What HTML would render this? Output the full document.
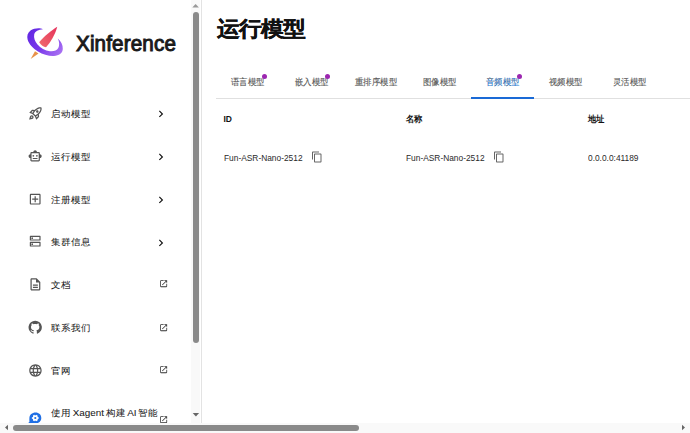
<!DOCTYPE html>
<html><head><meta charset="utf-8">
<style>
html,body{margin:0;padding:0;width:690px;height:433px;overflow:hidden;background:#fff;}
body{position:relative;font-family:"Liberation Sans",sans-serif;color:rgba(0,0,0,0.87);}
.a{position:absolute;white-space:nowrap;line-height:1;}
svg.i{position:absolute;fill:#555;}
.menu{font-size:9.9px;color:#1a1a1a;transform:scaleY(0.95);transform-origin:0 50%;-webkit-text-stroke:0.05px #000;}
.tab{font-size:9px;color:#555;-webkit-text-stroke:0.1px #555;transform:scaleX(0.935);transform-origin:0 0;}
.dot{position:absolute;width:5.6px;height:5.6px;border-radius:50%;background:#9c27b0;}
.th{font-size:8.5px;font-weight:bold;color:#111;}
.td{font-size:9.5px;color:#2a2a2a;transform:scaleX(0.88);transform-origin:0 0;}
</style></head>
<body>
<!-- sidebar -->
<svg class="a" style="left:24px;top:24px" width="42" height="38" viewBox="0 0 42 38">
  <defs>
    <linearGradient id="pg" x1="0" y1="0.2" x2="1" y2="0.8">
      <stop offset="0" stop-color="#6329e4"/><stop offset="0.5" stop-color="#7a3aea"/><stop offset="1" stop-color="#a870f2"/>
    </linearGradient>
    <linearGradient id="rg" x1="1" y1="0" x2="0" y2="1">
      <stop offset="0" stop-color="#e6315c"/><stop offset="1" stop-color="#ef6e6c"/>
    </linearGradient>
  </defs>
  <path d="M18.9 5.3 C16 3.6 10 4.2 6.5 6.5 C3.5 8.8 2.8 12 3.6 15.5 C4.8 20 9 24.5 14 27.5 C19 30.5 25 32.3 30 32 C35 31.6 38.5 29.5 38.8 25 C39 21 37 17 33.8 14.5 C35.5 17.5 35.6 21.5 34.3 24 C32.8 26.8 29.5 27.6 26 27.2 C21 26.6 16.5 24 13.5 20.5 C10.8 17.5 9.6 13.5 10.2 10.5 C11 7.3 14.5 5.6 18.9 5.3 Z" fill="url(#pg)"/>
  <path d="M33.3 2.8 C28 6 20 12.5 15.2 18.2 C17 21 19.5 22.8 22 23.3 C26.5 18.5 31 11 33.3 2.8 Z" fill="url(#rg)"/>
  <path d="M6.6 35.1 L11 27.2 L14.5 29.4 Z" fill="#e8924a"/>
</svg>
<div class="a" style="left:76px;top:33.1px;font-size:21.6px;font-weight:normal;-webkit-text-stroke:1px #1a1a1a;color:#1a1a1a;letter-spacing:0.15px;transform:scaleX(0.955);transform-origin:0 0">Xinference</div>

<!-- menu rows -->
<svg class="i" style="left:27.8px;top:106px" width="14.9" height="14.9" viewBox="0 0 24 24"><path d="M6 15c-.83 0-1.58.34-2.12.88C2.7 17.06 2 22 2 22s4.94-.7 6.12-1.88C8.66 19.58 9 18.83 9 18c0-1.66-1.34-3-3-3zm.71 3.71c-.28.28-2.17.76-2.17.76s.47-1.88.76-2.170c.17-.19.42-.3.7-.3.55 0 1 .45 1 1 0 .28-.11.53-.29.71zm10.71-5.060c6.36-6.36 4.24-11.31 4.24-11.31S16.71.22 10.35 6.58l-2.49-.5c-.65-.13-1.33.08-1.81.55L2 10.69l5 2.14L11.17 17l2.14 5 4.05-4.05c.47-.47.68-1.15.55-1.81l-.49-2.49zM7.41 10.83l-1.91-.82 1.97-1.97 1.44.29c-.57.83-1.08 1.7-1.5 2.5zm6.58 7.67-.82-1.91c.8-.42 1.67-.93 2.49-1.5l.29 1.44-1.96 1.97zM16 12.24c-1.32 1.32-3.38 2.4-4.02 2.72L9.04 12.02c.31-.62 1.39-2.68 2.72-4.01 4.68-4.68 8.23-3.930 8.23-3.93s.78 3.55-3.99 8.16zM15 11c1.1 0 2-.9 2-2s-.9-2-2-2-2 .9-2 2 .9 2 2 2z"/></svg>
<div class="a menu" style="left:51px;top:108.5px">启动模型</div>
<svg class="i" style="left:153.9px;top:107.1px;fill:#111" width="13.8" height="13.8" viewBox="0 0 24 24"><path d="M10 6 8.59 7.41 13.17 12l-4.58 4.59L10 18l6-6z"/></svg>

<svg class="i" style="left:28.1px;top:148.9px" width="14.25" height="14.25" viewBox="0 0 24 24"><path d="M20 9V7c0-1.1-.9-2-2-2h-3c0-1.66-1.34-3-3-3S9 3.34 9 5H6c-1.1 0-2 .9-2 2v2c-1.66 0-3 1.34-3 3s1.34 3 3 3v4c0 1.1.9 2 2 2h12c1.1 0 2-.9 2-2v-4c1.66 0 3-1.34 3-3s-1.34-3-3-3zm-2 10H6V7h12v12zm-9-6c-.83 0-1.5-.67-1.5-1.5S8.17 10 9 10s1.5.67 1.5 1.5S9.83 13 9 13zm7.5-1.5c0 .83-.67 1.5-1.5 1.5s-1.5-.67-1.5-1.5.67-1.5 1.5-1.5 1.5.67 1.5 1.5zM8 15h8v2H8v-2z"/></svg>
<div class="a menu" style="left:51px;top:151.5px">运行模型</div>
<svg class="i" style="left:153.9px;top:150.2px;fill:#111" width="13.8" height="13.8" viewBox="0 0 24 24"><path d="M10 6 8.59 7.41 13.17 12l-4.58 4.59L10 18l6-6z"/></svg>

<svg class="i" style="left:28.3px;top:192px" width="14.4" height="14.4" viewBox="0 0 24 24"><path d="M19 3H5c-1.11 0-2 .9-2 2v14c0 1.1.89 2 2 2h14c1.1 0 2-.9 2-2V5c0-1.1-.9-2-2-2zm0 16H5V5h14v14zm-8-2h2v-4h4v-2h-4V7h-2v4H7v2h4z"/></svg>
<div class="a menu" style="left:51px;top:195px">注册模型</div>
<svg class="i" style="left:153.9px;top:192.9px;fill:#111" width="13.8" height="13.8" viewBox="0 0 24 24"><path d="M10 6 8.59 7.41 13.17 12l-4.58 4.59L10 18l6-6z"/></svg>

<svg class="i" style="left:28.1px;top:234px" width="14.4" height="14.4" viewBox="0 0 24 24"><path d="M19 15v4H5v-4h14m1-2H4c-.55 0-1 .45-1 1v6c0 .55.45 1 1 1h16c.55 0 1-.45 1-1v-6c0-.55-.45-1-1-1zM7 18.5c-.82 0-1.5-.67-1.5-1.5s.68-1.5 1.5-1.5 1.5.67 1.5 1.5-.67 1.5-1.5 1.5zM19 5v4H5V5h14m1-2H4c-.55 0-1 .45-1 1v6c0 .55.45 1 1 1h16c.55 0 1-.45 1-1V4c0-.55-.45-1-1-1zM7 8.5c-.82 0-1.5-.67-1.5-1.5S6.18 5.5 7 5.5s1.5.68 1.5 1.5S7.830 8.5 7 8.5z"/></svg>
<div class="a menu" style="left:51px;top:237px">集群信息</div>
<svg class="i" style="left:153.9px;top:235.6px;fill:#111" width="13.8" height="13.8" viewBox="0 0 24 24"><path d="M10 6 8.59 7.41 13.17 12l-4.58 4.59L10 18l6-6z"/></svg>

<svg class="i" style="left:27.9px;top:277px" width="14.8" height="14.8" viewBox="0 0 24 24"><path d="M8 16h8v2H8zm0-4h8v2H8zm6-10H6c-1.1 0-2 .9-2 2v16c0 1.1.89 2 1.99 2H18c1.1 0 2-.9 2-2V8l-6-6zm4 18H6V4h7v5h5v11z"/></svg>
<div class="a menu" style="left:51px;top:279.5px">文档</div>
<svg class="i" style="left:159.2px;top:279.4px;fill:#333" width="9.3" height="9.3" viewBox="0 0 24 24"><path d="M19 19H5V5h7V3H5c-1.11 0-2 .9-2 2v14c0 1.1.89 2 2 2h14c1.1 0 2-.9 2-2v-7h-2v7zM14 3v2h3.59l-9.83 9.83 1.41 1.41L19 6.41V10h2V3h-7z"/></svg>

<svg class="i" style="left:28.3px;top:320.1px" width="14.4" height="14.4" viewBox="0 0 24 24"><path d="M12 1.27a11 11 0 00-3.48 21.46c.55.09.73-.28.73-.55v-1.84c-3.030.64-3.67-1.46-3.67-1.46-.55-1.29-1.28-1.65-1.28-1.65-.92-.65.1-.65.1-.65 1.1 0 1.73 1.1 1.73 1.1.92 1.65 2.57 1.2 3.21.92a2 2 0 01.64-1.47c-2.47-.27-5.04-1.19-5.04-5.5 0-1.1.46-2.1 1.2-2.84a3.76 3.76 0 010-2.93s.91-.28 3.11 1.1c1.8-.49 3.7-.49 5.5 0 2.1-1.38 3.02-1.1 3.02-1.1a3.76 3.76 0 010 2.93c.83.74 1.2 1.74 1.2 2.94 0 4.21-2.57 5.13-5.04 5.4.45.37.82.92.82 2.02v3.03c0 .27.1.64.73.55A11 11 0 0012 1.27"/></svg>
<div class="a menu" style="left:51px;top:322.5px">联系我们</div>
<svg class="i" style="left:159.2px;top:322.7px;fill:#333" width="9.3" height="9.3" viewBox="0 0 24 24"><path d="M19 19H5V5h7V3H5c-1.11 0-2 .9-2 2v14c0 1.1.89 2 2 2h14c1.1 0 2-.9 2-2v-7h-2v7zM14 3v2h3.59l-9.83 9.83 1.41 1.41L19 6.41V10h2V3h-7z"/></svg>

<svg class="i" style="left:28px;top:363.3px" width="14.9" height="14.9" viewBox="0 0 24 24"><path d="M11.99 2C6.47 2 2 6.48 2 12s4.47 10 9.99 10C17.52 22 22 17.52 22 12S17.52 2 11.99 2zm6.93 6h-2.95c-.32-1.25-.78-2.45-1.38-3.56 1.84.63 3.37 1.91 4.33 3.56zM12 4.04c.83 1.2 1.48 2.53 1.91 3.96h-3.82c.43-1.43 1.08-2.76 1.91-3.96zM4.26 14C4.1 13.36 4 12.69 4 12s.1-1.36.26-2h3.38c-.08.66-.14 1.32-.14 2s.06 1.34.14 2H4.26zm.82 2h2.95c.32 1.25.78 2.45 1.38 3.56-1.84-.63-3.37-1.9-4.33-3.56zm2.95-8H5.08c.96-1.66 2.49-2.93 4.33-3.56C8.81 5.55 8.35 6.75 8.03 8zM12 19.96c-.83-1.2-1.48-2.53-1.91-3.96h3.82c-.43 1.43-1.08 2.76-1.91 3.96zM14.34 14H9.66c-.09-.66-.16-1.32-.16-2s.07-1.35.16-2h4.680c.09.65.16 1.32.16 2s-.07 1.34-.16 2zm.25 5.56c.6-1.11 1.06-2.31 1.38-3.56h2.95c-.96 1.65-2.49 2.93-4.33 3.56zM16.36 14c.08-.66.14-1.32.14-2s-.06-1.34-.14-2h3.38c.16.64.26 1.31.26 2s-.1 1.36-.26 2h-3.38z"/></svg>
<div class="a menu" style="left:51px;top:365.5px">官网</div>
<svg class="i" style="left:159.2px;top:365px;fill:#333" width="9.3" height="9.3" viewBox="0 0 24 24"><path d="M19 19H5V5h7V3H5c-1.11 0-2 .9-2 2v14c0 1.1.89 2 2 2h14c1.1 0 2-.9 2-2v-7h-2v7zM14 3v2h3.59l-9.83 9.83 1.41 1.41L19 6.41V10h2V3h-7z"/></svg>

<svg class="a" style="left:27px;top:411px" width="16" height="14" viewBox="0 0 16 14">
  <path d="M8.6 1.6 C12 1.6 14.3 4 14.3 7 C14.3 10.2 11.8 12.4 8.6 12.4 L4 12.4 C3.2 12.4 2.5 12.1 2 11.7 L1.3 11.4 L2.6 10.6 C2.2 9.6 2.4 8.3 2.4 7 C2.6 4 5 1.6 8.6 1.6Z" fill="#1f6fe5"/>
  <g transform="translate(8.3 7)"><path d="M2.48 -0.77 L3.43 -0.70 L3.43 0.70 L2.48 0.77 L1.91 1.77 L2.32 2.62 L1.11 3.32 L0.58 2.54 L-0.58 2.54 L-1.11 3.32 L-2.32 2.62 L-1.91 1.77 L-2.48 0.77 L-3.43 0.70 L-3.43 -0.70 L-2.48 -0.77 L-1.91 -1.77 L-2.32 -2.62 L-1.11 -3.32 L-0.58 -2.54 L0.58 -2.54 L1.11 -3.32 L2.32 -2.62 L1.91 -1.77 Z" fill="#fff"/><circle r="2.6" fill="#fff"/><circle r="1.1" fill="#1f6fe5"/></g>
</svg>
<div class="a menu" style="left:51px;top:407.5px;word-spacing:-1.1px">使用 Xagent 构建 AI 智能</div>
<svg class="i" style="left:158.7px;top:414.7px;fill:#333" width="9.3" height="9.3" viewBox="0 0 24 24"><path d="M19 19H5V5h7V3H5c-1.11 0-2 .9-2 2v14c0 1.1.89 2 2 2h14c1.1 0 2-.9 2-2v-7h-2v7zM14 3v2h3.59l-9.83 9.83 1.41 1.41L19 6.41V10h2V3h-7z"/></svg>

<!-- vertical scrollbar -->
<div class="a" style="left:191px;top:0;width:9px;height:422.5px;background:#f9f9f9"></div>
<div class="a" style="left:193px;top:12px;width:6px;height:331px;background:#8a8a8a;border-radius:3px"></div>
<svg class="a" style="left:191px;top:2px" width="9" height="8" viewBox="0 0 9 8"><path d="M1.3 5.5 L4.6 2 L7.9 5.5Z" fill="#999"/></svg>
<svg class="a" style="left:191px;top:411px" width="9" height="8" viewBox="0 0 9 8"><path d="M1.7 1.9 L4.9 5.6 L8.1 1.9Z" fill="#666"/></svg>
<div class="a" style="left:201px;top:0;width:1px;height:422.5px;background:#e3e3e3"></div>

<!-- main -->
<div class="a" style="left:217px;top:18.5px;font-size:22.4px;font-weight:bold;color:#111;-webkit-text-stroke:0.35px #111;transform:scaleY(0.923);transform-origin:0 0">运行模型</div>

<div class="a tab" style="left:231px;top:78px">语言模型</div>
<div class="dot" style="left:261.9px;top:73.6px"></div>
<div class="a tab" style="left:295px;top:78px">嵌入模型</div>
<div class="dot" style="left:324.9px;top:73.6px"></div>
<div class="a tab" style="left:354.5px;top:78px">重排序模型</div>
<div class="a tab" style="left:422.5px;top:78px">图像模型</div>
<div class="a tab" style="left:486px;top:78px;color:#1976d2">音频模型</div>
<div class="dot" style="left:516.9px;top:73.6px"></div>
<div class="a tab" style="left:549px;top:78px">视频模型</div>
<div class="a tab" style="left:613px;top:78px">灵活模型</div>
<div class="a" style="left:216px;top:98px;width:474px;height:1px;background:#e0e0e0"></div>
<div class="a" style="left:471px;top:96.5px;width:63px;height:2px;background:#1a6ad6"></div>

<div class="a th" style="left:223.5px;top:115px">ID</div>
<div class="a th" style="left:405.5px;top:115px;transform:scaleX(0.92);transform-origin:0 0">名称</div>
<div class="a th" style="left:587.5px;top:115px;transform:scaleX(0.92);transform-origin:0 0">地址</div>

<div class="a td" style="left:223.5px;top:152.9px">Fun-ASR-Nano-2512</div>
<svg class="i" style="left:311px;top:151px;fill:#666" width="12" height="12" viewBox="0 0 24 24"><path d="M16 1H4c-1.1 0-2 .9-2 2v14h2V3h12V1zm3 4H8c-1.1 0-2 .9-2 2v14c0 1.1.9 2 2 2h11c1.1 0 2-.9 2-2V7c0-1.1-.9-2-2-2zm0 16H8V7h11v14z"/></svg>
<div class="a td" style="left:405.5px;top:152.9px">Fun-ASR-Nano-2512</div>
<svg class="i" style="left:493px;top:151px;fill:#666" width="12" height="12" viewBox="0 0 24 24"><path d="M16 1H4c-1.1 0-2 .9-2 2v14h2V3h12V1zm3 4H8c-1.1 0-2 .9-2 2v14c0 1.1.9 2 2 2h11c1.1 0 2-.9 2-2V7c0-1.1-.9-2-2-2zm0 16H8V7h11v14z"/></svg>
<div class="a td" style="left:587.5px;top:152.9px">0.0.0.0:41189</div>

<!-- horizontal scrollbar -->
<div class="a" style="left:0;top:422.5px;width:690px;height:10.5px;background:#f9f9f9"></div>
<div class="a" style="left:13px;top:424.7px;width:346px;height:6.2px;background:#8a8a8a;border-radius:3px"></div>
<svg class="a" style="left:2px;top:423px" width="9" height="9" viewBox="0 0 9 9"><path d="M6 1.8 L3 4.5 L6 7.2Z" fill="#666"/></svg>
<svg class="a" style="left:679px;top:423px" width="9" height="9" viewBox="0 0 9 9"><path d="M3 1.8 L6 4.5 L3 7.2Z" fill="#666"/></svg>
</body></html>
